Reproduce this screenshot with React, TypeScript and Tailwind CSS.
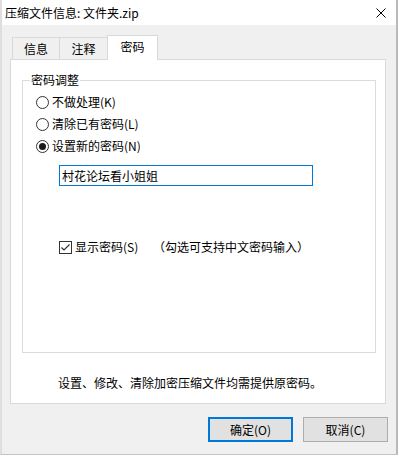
const font = { fontFamily: '"Noto Sans CJK SC", "Microsoft YaHei", sans-serif' };

function Radio({ checked, label }: { checked?: boolean; label: string }) {
  return (
    <div className="flex h-[22px] items-center">
      <svg width="13" height="13" viewBox="0 0 13 13" className="shrink-0">
        <circle cx="6.5" cy="6.5" r="6" fill="#fff" stroke="#333" strokeWidth="1" />
        {checked && <circle cx="6.5" cy="6.5" r="3.5" fill="#1a1a1a" />}
      </svg>
      <span className="ml-[3px] text-[12px] leading-[14px] text-black">{label}</span>
    </div>
  );
}

function Tab({ label, active, first }: { label: string; active?: boolean; first?: boolean }) {
  if (active) {
    return (
      <div className="relative z-10 -mb-px flex h-[25px] w-[51px] items-center justify-center border border-b-0 border-[#d9d9d9] bg-white pb-[2px] text-[12px] text-black">
        {label}
      </div>
    );
  }
  return (
    <div
      className={
        first
          ? "flex h-[22px] w-[47px] items-center justify-center border-l border-t border-[#d9d9d9] bg-[#f0f0f0] text-[12px] text-black"
          : "flex h-[22px] w-[48px] items-center justify-center border-l border-t border-[#d9d9d9] bg-[#f0f0f0] text-[12px] text-black"
      }
    >
      {label}
    </div>
  );
}

export default function App() {
  return (
    <div className="h-[457px] w-[399px] bg-white" style={font}>
      <div className="flex h-[455px] w-[398px] flex-col border-b border-l-2 border-r-2 border-b-[#c4c4c4] border-l-[#dedede] border-r-[#b9b9b9] bg-[#f0f0f0]">
        {/* title bar */}
        <div className="flex h-[25px] shrink-0 items-center justify-between bg-white pl-[3px] pr-[10px]">
          <span className="text-[12px] leading-[14px] text-black">压缩文件信息: 文件夹.zip</span>
          <svg width="10" height="10" viewBox="0 0 10 10">
            <path d="M0.5 0.5 L9.5 9.5 M9.5 0.5 L0.5 9.5" stroke="#000" strokeWidth="1" />
          </svg>
        </div>

        {/* tabs */}
        <div className="ml-[10px] mt-[10px] flex h-[24px] items-end">
          <Tab label="信息" first />
          <Tab label="注释" />
          <Tab label="密码" active />
        </div>

        {/* panel */}
        <div className="ml-[8px] mr-[10px] flex h-[345px] flex-col border border-[#d9d9d9] bg-white">
          <fieldset className="ml-[11px] mr-[9px] mt-[13px] h-[280px] border border-[#dcdcdc] pl-[13px]">
            <legend className="ml-[-6px] px-[1px] text-[12px] leading-[14px] text-black">密码调整</legend>
            <div className="mt-[4px] flex flex-col">
              <Radio label="不做处理(K)" />
              <Radio label="清除已有密码(L)" />
              <Radio label="设置新的密码(N)" checked />
            </div>
            <div className="ml-[23px] mt-[8px] flex h-[21px] w-[254px] items-center border border-[#0078d7] px-[2px] text-[12px] text-black">
              村花论坛看小姐姐
            </div>
            <div className="ml-[23px] mt-[51px] flex h-[20px] items-center text-[12px] text-black">
              <svg width="13" height="13" viewBox="0 0 13 13" className="shrink-0">
                <rect x="0.5" y="0.5" width="12" height="12" fill="#fff" stroke="#333" />
                <path d="M2.5 6.5 L5 9 L10.5 3.5" fill="none" stroke="#333" strokeWidth="1.2" />
              </svg>
              <span className="ml-[3px] w-[78px] leading-[14px]">显示密码(S)</span>
              <span className="leading-[14px]">（勾选可支持中文密码输入）</span>
            </div>
          </fieldset>
          <div className="ml-[47px] mt-[23px] text-[12px] leading-[14px] text-black">
            设置、修改、清除加密压缩文件均需提供原密码。
          </div>
        </div>

        {/* buttons */}
        <div className="mr-[8px] mt-[13px] flex justify-end gap-[10px]">
          <button className="flex h-[25px] w-[85px] items-center justify-center border-2 border-[#0078d7] bg-[#e1e1e1] text-[12px] text-black">
            确定(O)
          </button>
          <button className="flex h-[25px] w-[85px] items-center justify-center border border-[#adadad] bg-[#e1e1e1] text-[12px] text-black">
            取消(C)
          </button>
        </div>
      </div>
    </div>
  );
}
